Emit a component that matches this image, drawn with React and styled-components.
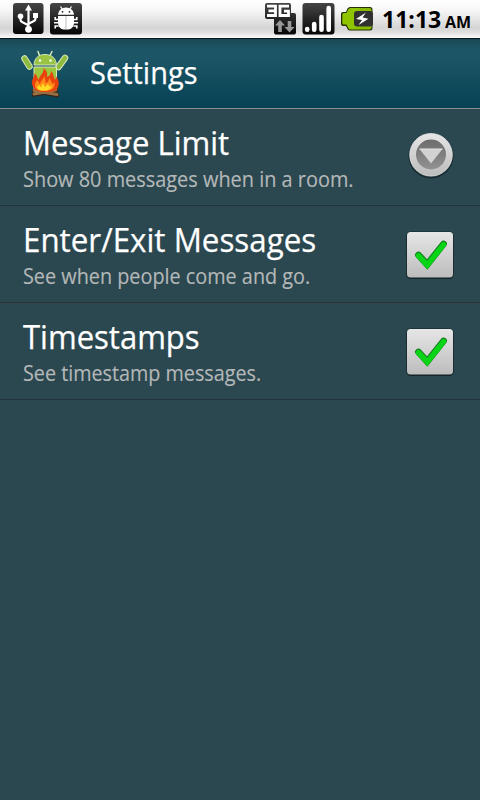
import React from 'react';
import styled, { createGlobalStyle } from 'styled-components';

const GlobalStyle = createGlobalStyle`
  * { box-sizing: border-box; }
  body { margin: 0; background: #2b4750; font-family: "Open Sans", "Noto Sans", sans-serif; }
  svg { display: block; flex: none; }
`;

const Screen = styled.main`
  width: 480px;
  height: 800px;
  overflow: hidden;
  background: #2b4750;
  color: #fff;
`;

const StatusBar = styled.header`
  height: 39px;
  display: flex;
  align-items: flex-start;
  justify-content: space-between;
  padding: 2px 8px 0 12px;
  background: linear-gradient(#fff 0, #f7f7f7 10px, #d5d5d5 28px, #dedede 32px, #fafafa 38px);
  border-bottom: 1px solid #06161c;
`;

const IconGroup = styled.div`
  display: flex;
  gap: ${(p) => p.$gap}px;
`;

const Clock = styled.div`
  display: flex;
  align-items: baseline;
  width: 90px;
  margin-left: 4px;
  line-height: 34px;
  color: #000;
  font-weight: 700;
  white-space: nowrap;
`;

const Fit = styled.span`
  display: inline-block;
  transform: scaleX(${(p) => p.$scale});
  transform-origin: 0 50%;
  white-space: nowrap;
`;

const Time = styled(Fit)`
  width: 64px;
  font-size: 24px;
`;

const Meridiem = styled(Fit)`
  font-size: 16.5px;
`;

const TitleBar = styled.div`
  height: 70px;
  display: flex;
  align-items: center;
  padding: 0 0 0 17px;
  gap: 19px;
  background: linear-gradient(#1b4753 0, #1d5666 10px, #1b5566 20px, #064254 69px);
  border-bottom: 1px solid #8a8f92;
`;

const Heading = styled.h1`
  margin: 0;
  padding-bottom: 4px;
  font-size: 31px;
  line-height: 40px;
  font-weight: 400;
  -webkit-text-stroke: 0.25px currentColor;
`;

const Row = styled.section`
  height: 97px;
  display: flex;
  align-items: flex-start;
  justify-content: space-between;
  padding: 11px 25px 0 23px;
  border-bottom: 1px solid ${(p) => p.$line};
`;

const Title = styled.div`
  font-size: 33px;
  line-height: 46px;
  -webkit-text-stroke: 0.25px currentColor;
`;

const Summary = styled.div`
  font-size: 22px;
  line-height: 24px;
  color: #b4b8b8;
  -webkit-text-stroke: 0.15px currentColor;
`;

const Control = styled.div`
  padding-top: ${(p) => p.$top}px;
`;

function Usb() {
  return (
    <svg width="32" height="33" viewBox="0 0 32 33">
      <rect x="1" y="1" width="30.5" height="31" rx="3" fill="url(#tile)" />
      <g stroke="#fff" strokeWidth="2.2" fill="none">
        <path d="M16.5 6v21M8.5 15v2.5q0 2 2 2.7l6 3M23.5 14v2.5q0 2-2 2.8l-5 2.4" />
      </g>
      <g fill="#fff">
        <path d="M16.5 2.5l3.5 6h-7z" />
        <circle cx="8.5" cy="14.3" r="2.8" />
        <rect x="21" y="11" width="5" height="5" />
        <circle cx="16.5" cy="27.3" r="3.4" />
      </g>
    </svg>
  );
}

function Debug() {
  return (
    <svg width="33" height="33" viewBox="0 0 33 33">
      <rect x="0" y="1" width="32" height="31.500" rx="3" fill="url(#tile)" />
      <path d="M10.500 4.500l2 3M21.500 4.500l-2 3" stroke="#fff" strokeWidth="1.300" />
      <path d="M8 12.800C8.500 8.500 11.500 5.500 16 5.500s7.500 3 8 7.300z" fill="#fff" />
      <path d="M8 14h16v6.500q0 6-5.500 7h-5Q8 26.500 8 20.500z" fill="#fff" />
      <path d="M16 14v13.500" stroke="#aaa" strokeWidth="0.800" />
      <path d="M8.500 17.500H5.200V15M8.500 20.800H4M8.500 24H5.200v2.500M23.500 17.500h3.300V15M23.500 20.800H28M23.500 24h3.300v2.500" fill="none" stroke="#fff" strokeWidth="1.600" />
      <circle cx="12.500" cy="9.800" r="0.900" fill="#222" />
      <circle cx="19.500" cy="9.800" r="0.900" fill="#222" />
    </svg>
  );
}

function Network() {
  return (
    <svg width="33" height="33" viewBox="0 0 33 33">
      <path d="M3 1h22q2 0 2 2v8h3q2 0 2 2v17.500q0 2-2 2H12q-2 0-2-2V17H3q-2 0-2-2V3q0-2 2-2z" fill="url(#tile)" />
      <path d="M3 4.200h8.500v9.300H3M4.500 8.900h7M25 4.200h-9v9.300h8.500V9.200H20" fill="none" stroke="#fff" strokeWidth="2.800" />
      <path d="M16 18l-5 5.500h3.200V30h3.600v-6.500H21zM25.500 30.500l5-5.500h-3.200v-6h-3.600v6h-3.200z" fill="#999" />
    </svg>
  );
}

function Signal() {
  return (
    <svg width="33" height="33" viewBox="0 0 33 33">
      <rect x="0.500" y="1" width="32" height="31.500" rx="3" fill="url(#tile)" />
      <g stroke="#fff" strokeWidth="4.600" strokeLinecap="round">
        <path d="M5.200 27v0.800M12.200 22v5.800M19.500 15v12.800M26.700 6v21.800" />
      </g>
    </svg>
  );
}

function Battery() {
  return (
    <svg width="33" height="33" viewBox="0 0 33 33">
      <path d="M10 5h20q2.500 0 2.500 2.500V26q0 2.500-2.500 2.500H10q-1.500 0-2.500-1.500l-1.500-3H3q-2 0-2-2V12q0-2 2-2h3L7.500 6.500Q8.500 5 10 5z" fill="#263000" />
      <path d="M10.500 6H20v21.500h-9.500q-1.500 0-2.300-1.500L6.500 22.500H4Q2.300 22.500 2.300 21v-8.500q0-1.500 1.700-1.500h2.500L8.200 7.500Q9 6 10.500 6z" fill="#8fc400" />
      <path d="M20 6h9.500q2 0 2 2v17.500q0 2-2 2H20z" fill="#86b900" />
      <rect x="14" y="9" width="19" height="15.500" rx="3" fill="#303030" />
      <path d="M26 10.500l-10 6.500 6 1-3.500 5 10-6.200-6-1.300z" fill="#fff" />
    </svg>
  );
}

function CampfireRobot() {
  return (
    <svg width="54" height="54" viewBox="0 0 54 54">
      <g stroke="#d8ebb4" strokeWidth="1.500" strokeLinecap="round">
        <path d="M22.500 8.500l-1.500-4M33 8.500l2-4" />
      </g>
      <g stroke="#d6e6bd" strokeWidth="6.500" strokeLinecap="round">
        <path d="M7.500 11.500l5 8M48 11l-6.500 9" />
      </g>
      <g stroke="#8dbb3d" strokeWidth="4.500" strokeLinecap="round">
        <path d="M7.500 11.500l5 8M48 11l-6.500 9" />
      </g>
      <path d="M17 18C17.500 11 21.500 7.500 28 7.500S39 11 39.500 18z" fill="#99c444" stroke="#d6e6bd" />
      <path d="M17 20h22.500V42q0 3-3 3H20q-3 0-3-3z" fill="#9dc63f" stroke="#d6e6bd" />
      <circle cx="23" cy="13.500" r="1.200" fill="#fff" />
      <circle cx="33.500" cy="13.500" r="1.200" fill="#fff" />
      <g stroke="#392416" strokeWidth="4.500" strokeLinecap="round">
        <path d="M17 47.500l22-4M17 44l23 4" />
      </g>
      <g stroke="#997044" strokeWidth="2.800" strokeLinecap="round">
        <path d="M17 47l22-4M17 43.500l23 4" />
      </g>
      <path d="M15 37c-1-5 3-7 2.500-11 3 3 3 5 4 7 1-5 6-7 5-12 4 3 4 6 3.500 9 3-1 4-3 4-6 3 3 2 5 4 9 1-1 1-3 0.500-4 4 4 3.500 8 2.500 11-2 5-8 5-13 5-7 0-12-2-13-8z" fill="#e8430f" />
      <path d="M18 38c0-3 2-4 2-5 2 2 2 3 3 4 1-4 4-5 4-8 2 3 1 6 2 7 2-1 3-2 3-5 3 3 2 5 4 6l1.500-2c1 7-4 9-9.500 9s-10-1-10-6z" fill="#ff8c17" />
      <path d="M20 40l2-2 2 2 2-4 2 4 3-3 2 3 2-2c0 4-4 5.500-7.500 5.500S20 43 20 40z" fill="#ffdc24" />
    </svg>
  );
}

function Dropdown() {
  return (
    <svg width="48" height="50" viewBox="0 0 48 50">
      <circle cx="24" cy="24.800" r="22.600" fill="#172c33" />
      <circle cx="24" cy="23.800" r="21.300" fill="url(#silver)" stroke="#e4e4e4" strokeWidth="0.800" />
      <circle cx="24" cy="23.500" r="15" fill="url(#disc)" />
      <path d="M12.500 18h23L24 32.500z" fill="#d2d2d2" />
      <path d="M12.500 18h23" stroke="#e5e5e5" />
    </svg>
  );
}

function Checkbox() {
  return (
    <svg width="50" height="50" viewBox="0 0 50 50">
      <rect x="1.300" y="1.500" width="47.400" height="47.500" rx="4.500" fill="#132329" />
      <rect x="2" y="2" width="46" height="45.500" rx="3.500" fill="url(#silver)" />
      <path d="M13.500 25l8.700 9.500L38.500 14" fill="none" stroke="#14801d" strokeWidth="6.800" strokeLinecap="round" />
      <path d="M13.500 25.600l8.700 9.500L38.500 14.600" fill="none" stroke="#08d516" strokeWidth="5.300" strokeLinecap="round" />
    </svg>
  );
}

function Gradients() {
  return (
    <svg width="0" height="0">
      <defs>
        <linearGradient id="tile" x2="0" y2="1"><stop stopColor="#454545" /><stop offset="1" stopColor="#050505" /></linearGradient>
        <linearGradient id="silver" x2="0" y2="1"><stop stopColor="#e6e6e6" /><stop offset="1" stopColor="#bcbcbc" /></linearGradient>
        <linearGradient id="disc" x2="0" y2="1"><stop stopColor="#6d6d6d" /><stop offset="1" stopColor="#929292" /></linearGradient>
      </defs>
    </svg>
  );
}

const settings = [
  { title: 'Message Limit', summary: 'Show 80 messages when in a room.', titleScale: 0.94, summaryScale: 0.905, line: '#22343a' },
  { title: 'Enter/Exit Messages', summary: 'See when people come and go.', titleScale: 0.949, summaryScale: 0.901, line: '#343236', checked: true },
  { title: 'Timestamps', summary: 'See timestamp messages.', titleScale: 0.94, summaryScale: 0.898, line: '#22343a', checked: true },
];

export default function App() {
  return (
    <Screen>
      <GlobalStyle />
      <StatusBar>
        <IconGroup $gap={6}><Usb /><Debug /></IconGroup>
        <IconGroup $gap={5}>
          <Network /><Signal /><Battery />
          <Clock><Time $scale={0.96}>11:13</Time><Meridiem $scale={0.97}>AM</Meridiem></Clock>
        </IconGroup>
      </StatusBar>
      <TitleBar>
        <CampfireRobot />
        <Heading><Fit $scale={0.935}>Settings</Fit></Heading>
      </TitleBar>
      {settings.map((s) => (
        <Row key={s.title} $line={s.line}>
          <div>
            <Title><Fit $scale={s.titleScale}>{s.title}</Fit></Title>
            <Summary><Fit $scale={s.summaryScale}>{s.summary}</Fit></Summary>
          </div>
          <Control $top={s.checked ? 13 : 11}>{s.checked ? <Checkbox /> : <Dropdown />}</Control>
        </Row>
      ))}
      <Gradients />
    </Screen>
  );
}
